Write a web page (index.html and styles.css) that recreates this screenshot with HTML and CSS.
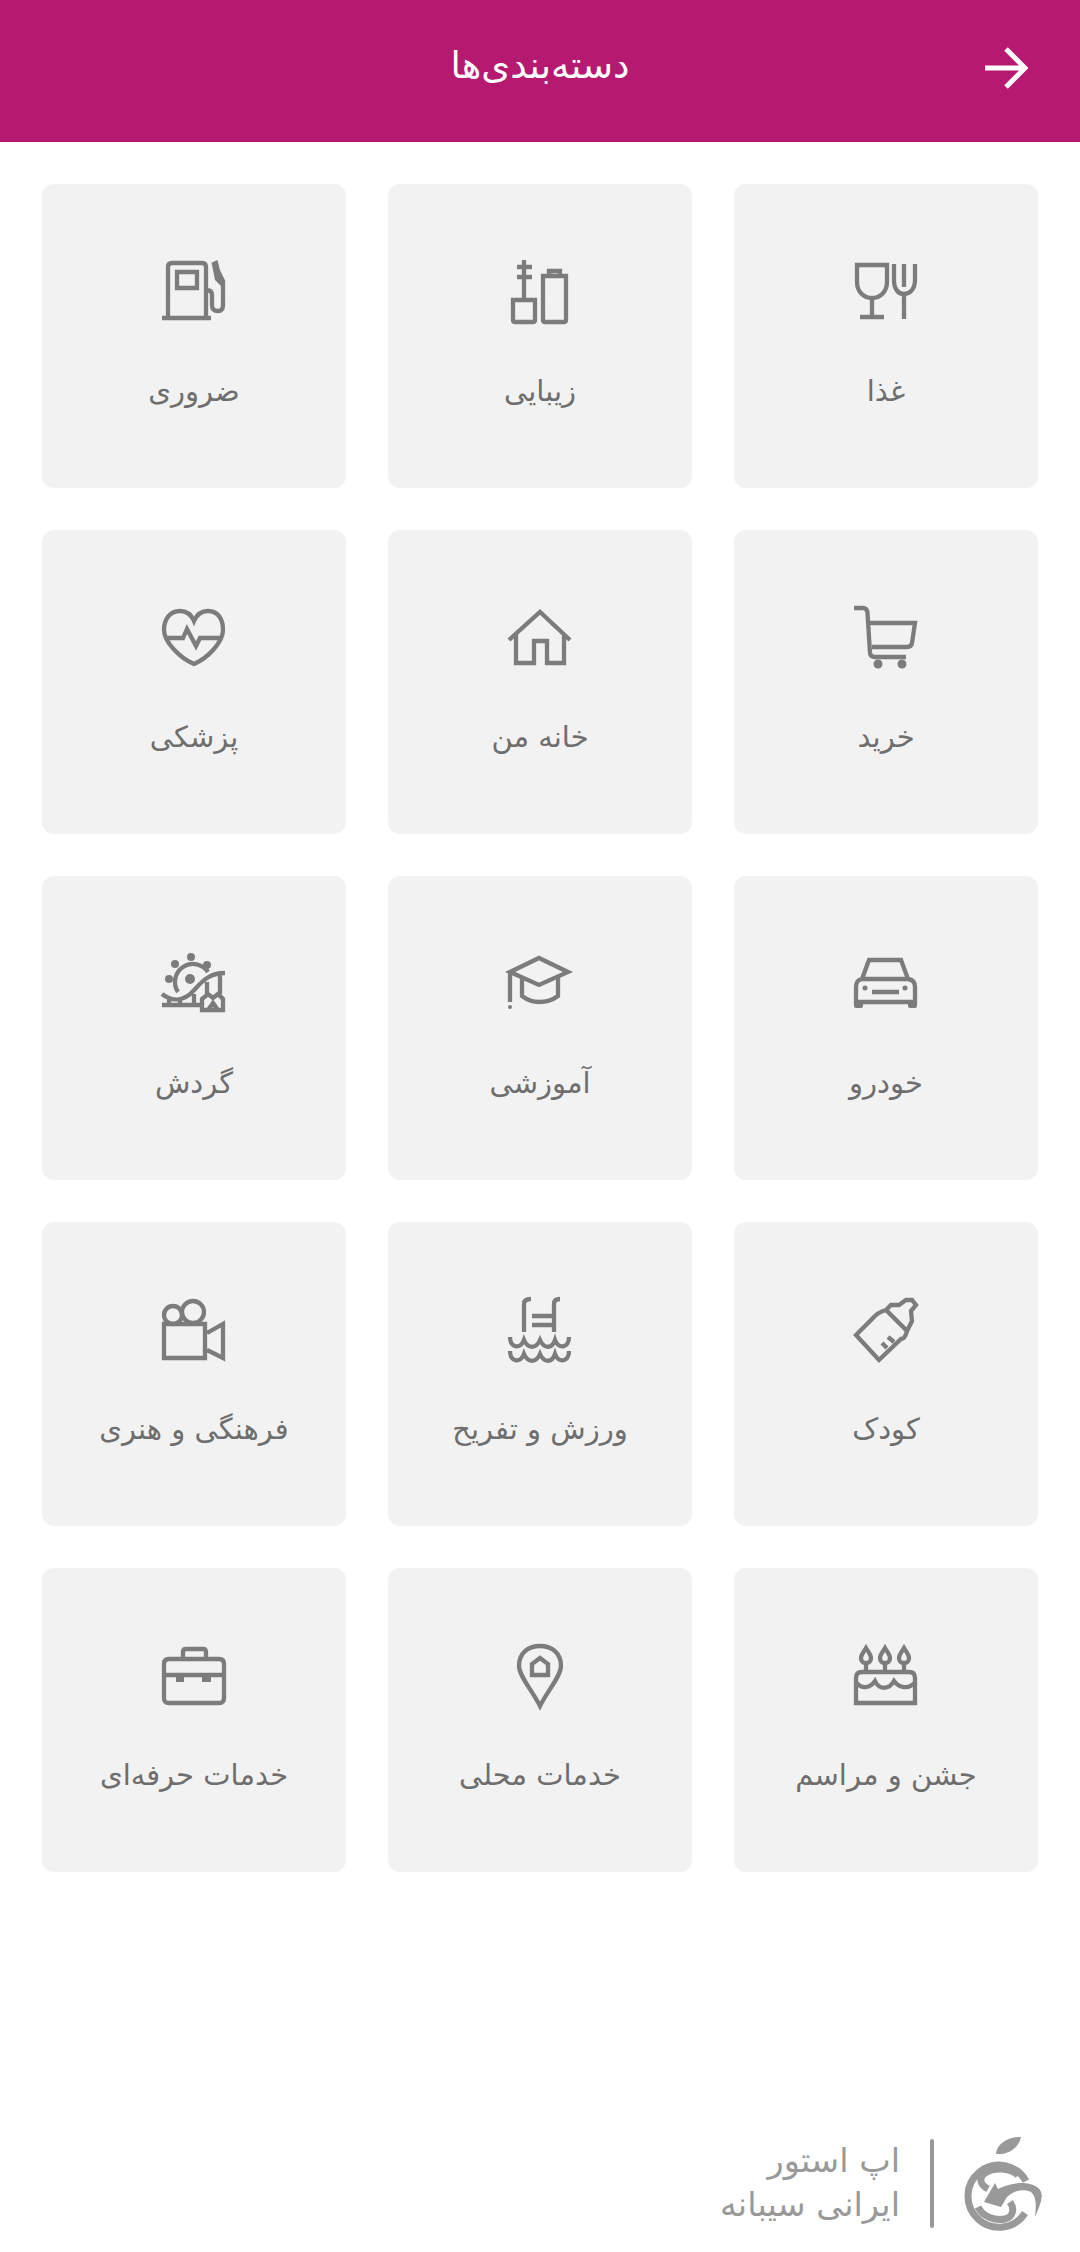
FILE: index.html
```html
<!DOCTYPE html>
<html lang="fa" dir="rtl">
  <head>
    <meta charset="utf-8" />
    <meta name="viewport" content="width=device-width, initial-scale=1.0" />
    <title>دسته‌بندی‌ها</title>
    <link rel="stylesheet" href="styles.css">
  </head>
  <body>
    <main class="page">
      <header class="topbar">
        <svg class="back" viewBox="0 0 44 42"><path d="M1 21H41M22 2L41 21L22 40"/></svg>
        <h1 class="title">دسته‌بندی‌ها</h1>
      </header>

      <section class="grid">
        <a class="card">
          <svg class="icon" viewBox="0 0 64 64"><path d="M3 5H33V22C33 32 26 38 18 38C10 38 3 32 3 22ZM18 38V57M6 57H30M40 4V20C40 29 44 34 50 34C56 34 61 29 61 20V4M50 4V27M50 34V59"/></svg>
          <span class="label">غذا</span>
        </a>
        <a class="card">
          <svg class="icon" viewBox="0 0 64 64"><path d="M16 0V39M9 7H24M9 17H24M5 40H27V60Q27 62 25 62H7Q5 62 5 60ZM35 16H58V60Q58 62 56 62H37Q35 62 35 60ZM41 15V11H52V15"/></svg>
          <span class="label">زیبایی</span>
        </a>
        <a class="card">
          <svg class="icon" viewBox="0 0 64 64"><path d="M6 57V7Q6 3 10 3H40Q44 3 44 7V57M0 58H49M15 12H35V28H15ZM44 30Q50 30 50 35V45Q50 51 56 51Q61 51 61 45V21L56 11L54 3L52 4L55 19L61 25"/></svg>
          <span class="label">ضروری</span>
        </a>

        <a class="card">
          <svg class="icon" viewBox="0 0 64 64"><path d="M0 2H9Q13 2 13.500 7L16 47Q16.500 51 21 51H52M16 17H61L58 37Q57.500 41 53 41H18"/><circle class="solid" cx="24" cy="58" r="4.500"/><circle class="solid" cx="48" cy="58" r="4.500"/></svg>
          <span class="label">خرید</span>
        </a>
        <a class="card">
          <svg class="icon" viewBox="0 0 64 64"><path d="M1 34L32 6L62 34M8 28V57H26V35H39V57H56V28"/></svg>
          <span class="label">خانه من</span>
        </a>
        <a class="card">
          <svg class="icon" viewBox="0 0 64 64"><path d="M32 15C29 8 24 5 18 5C8 5 2 13 2 24C2 36 18 52 32 58C46 52 61 36 61 24C61 13 56 5 46 5C40 5 35 8 32 15ZM5 32H21L25 23L34 40L38 32H59"/></svg>
          <span class="label">پزشکی</span>
        </a>

        <a class="card">
          <svg class="icon" viewBox="0 0 64 64"><path d="M15 8H47L54 27H8ZM8 27Q2 28 2 35V50H61V35Q61 28 54 27ZM18 40H45"/><circle class="solid" cx="11" cy="36" r="2.500"/><circle class="solid" cx="51" cy="36" r="2.500"/><rect class="solid" x="0" y="48" width="9" height="8" rx="2"/><rect class="solid" x="54" y="48" width="9" height="8" rx="2"/></svg>
          <span class="label">خودرو</span>
        </a>
        <a class="card">
          <svg class="icon" viewBox="0 0 64 64"><path d="M31 6L60 20L31 33L2 20ZM14 27V44Q22 50 31 50Q42 50 50 44V26M2 20V50"/><circle class="solid" cx="2" cy="55" r="2"/></svg>
          <span class="label">آموزشی</span>
        </a>
        <a class="card">
          <svg class="icon" viewBox="0 0 64 64"><path d="M16 40A18 18 0 1 1 46 20M0 42C10 50 20 48 27 43C36 36 42 21 63 21M0 53H38M7 46V53M18 47V53M32 42V53M45 30V42M58 21V42M40 58V47L46 42L51 46L56 42L61 47V58ZM46 58L51 51L56 58"/><circle class="solid" cx="28" cy="27" r="5"/><circle class="solid" cx="29" cy="5" r="4"/><circle class="solid" cx="13" cy="12" r="4"/><circle class="solid" cx="45" cy="13" r="4"/><circle class="solid" cx="7" cy="27" r="4"/></svg>
          <span class="label">گردش</span>
        </a>

        <a class="card">
          <svg class="icon" viewBox="0 0 64 64"><path d="M2 37L18 21Q24 14 32 12L53 33Q51 41 47 41L25 62ZM32 12L37 7L45 7L52 2L58 2L62 7L57 13L58 23L53 33M28 45L33 50M34 39L40 44"/></svg>
          <span class="label">کودک</span>
        </a>
        <a class="card">
          <svg class="icon" viewBox="0 0 64 64"><path d="M16 34V6Q16 1 23 1M46 34V6Q46 1 52 1M24 18H46M24 27H46M2 39C2 51 13 51 16 42C20 51 28 51 32 42C36 51 44 51 47 42C50 51 61 51 61 39M2 53C2 65 13 65 16 56C20 65 28 65 32 56C36 65 44 65 47 56C50 65 61 65 61 53"/></svg>
          <span class="label">ورزش و تفریح</span>
        </a>
        <a class="card">
          <svg class="icon" viewBox="0 0 64 64"><path d="M2 26H43V60H2ZM45 35L61 26V60L45 52"/><circle cx="11" cy="17" r="9"/><circle cx="31" cy="14" r="11"/></svg>
          <span class="label">فرهنگی و هنری</span>
        </a>

        <a class="card">
          <svg class="icon" viewBox="0 0 64 64"><path d="M2 59V34Q2 28 8 28H55Q61 28 61 34V59ZM2 38C8 46 16 44 21 37C25 46 35 46 40 37C45 44 55 46 61 38M12 27V19M31 27V19M50 27V19M12 4C9 9 7 11 7 14C7 17 9 19 12 19C15 19 17 17 17 14C17 11 15 9 12 4ZM31 4C28 9 26 11 26 14C26 17 28 19 31 19C34 19 36 17 36 14C36 11 34 9 31 4ZM50 4C47 9 45 11 45 14C45 17 47 19 50 19C53 19 55 17 55 14C55 11 53 9 50 4Z"/></svg>
          <span class="label">جشن و مراسم</span>
        </a>
        <a class="card">
          <svg class="icon" viewBox="0 0 64 64"><path d="M32 62C24 46 11 32 11 22C11 9 20 2 32 2C44 2 53 9 53 22C53 32 40 46 32 62ZM24 31V20L32 14L40 20V31Z"/></svg>
          <span class="label">خدمات محلی</span>
        </a>
        <a class="card">
          <svg class="icon" viewBox="0 0 64 64"><path d="M7 15H57Q62 15 62 20V54Q62 59 57 59H7Q2 59 2 54V20Q2 15 7 15ZM21 15V8Q21 5 24 5H41Q44 5 44 8V15M2 31H62"/><path class="solid" d="M14 32H22V38H14ZM40 32H49V38H40Z"/></svg>
          <span class="label">خدمات حرفه‌ای</span>
        </a>
      </section>

      <footer class="brand">
        <svg class="brand-logo" viewBox="0 0 78 92">
          <path class="leaf" d="M31 17C32 6 44 0 56 0C54 10 44 18 31 17Z"/>
          <path class="ring" d="M61 44A31 31 0 1 0 60 76"/>
          <path class="inner" d="M23 52C14 47 14 40 20 36C30 30 44 31 53 38M13 70C18 80 30 84 40 82C48 80 50 72 45 65"/>
          <path class="arrow" d="M19 65L30 46L33 52C45 46 62 43 72 50C79 55 78 62 70 80C71 70 72 60 66 55C58 51 48 54 42 60L36 70Z"/>
        </svg>
        <span class="brand-line"></span>
        <p class="brand-text">اپ استور<br>ایرانی سیبانه</p>
      </footer>
    </main>
  </body>
</html>
```

FILE: styles.css
```css
html {
  height: 100%;
  padding: 0;
  margin: 0;
}
body {
  height: 100%;
  margin: 0;
  padding: 0;
  background-color: white;
  font-family: "DejaVu Sans", sans-serif;
  font-size: 29px;
  color: #6e6e6e;
}
.page {
  height: 100%;
  display: flex;
  flex-flow: column;
}

.topbar {
  height: 142px;
  flex: none;
  display: flex;
  align-items: center;
  justify-content: center;
  position: relative;
  background-color: #b61a70;
  color: white;
}
.title {
  margin: 0 0 12px;
  font-size: 37px;
  font-weight: normal;
}
.back {
  position: absolute;
  right: 52px;
  top: 47px;
  width: 44px;
  height: 42px;
}
.back path {
  fill: none;
  stroke: white;
  stroke-width: 5;
}

.grid {
  display: grid;
  grid-template-columns: repeat(3, 304px);
  grid-auto-rows: 304px;
  gap: 42px;
  padding: 42px;
}
.card {
  display: flex;
  flex-flow: column;
  align-items: center;
  padding-top: 76px;
  background-color: #f2f2f2;
  border-radius: 12px;
}
.icon {
  width: 64px;
  height: 64px;
  overflow: visible;
  fill: none;
  stroke: #7c7c7c;
  stroke-width: 4.300;
}
.icon .solid {
  fill: #7c7c7c;
  stroke: none;
}
.label {
  margin-top: 47px;
  line-height: 40px;
}

.brand {
  margin-top: auto;
  display: flex;
  align-items: center;
  padding: 0 37px 23px 0;
  color: #999;
}
.brand-logo {
  width: 78px;
  height: 92px;
  overflow: visible;
}
.leaf, .arrow {
  fill: #999;
}
.ring, .inner {
  fill: none;
  stroke: #999;
  stroke-width: 7;
}
.brand-line {
  width: 4px;
  height: 89px;
  margin: 0 31px 0 30px;
  background-color: #999;
  border-radius: 2px;
}
.brand-text {
  margin: 0;
  font-size: 33.500px;
  line-height: 44px;
}
```
